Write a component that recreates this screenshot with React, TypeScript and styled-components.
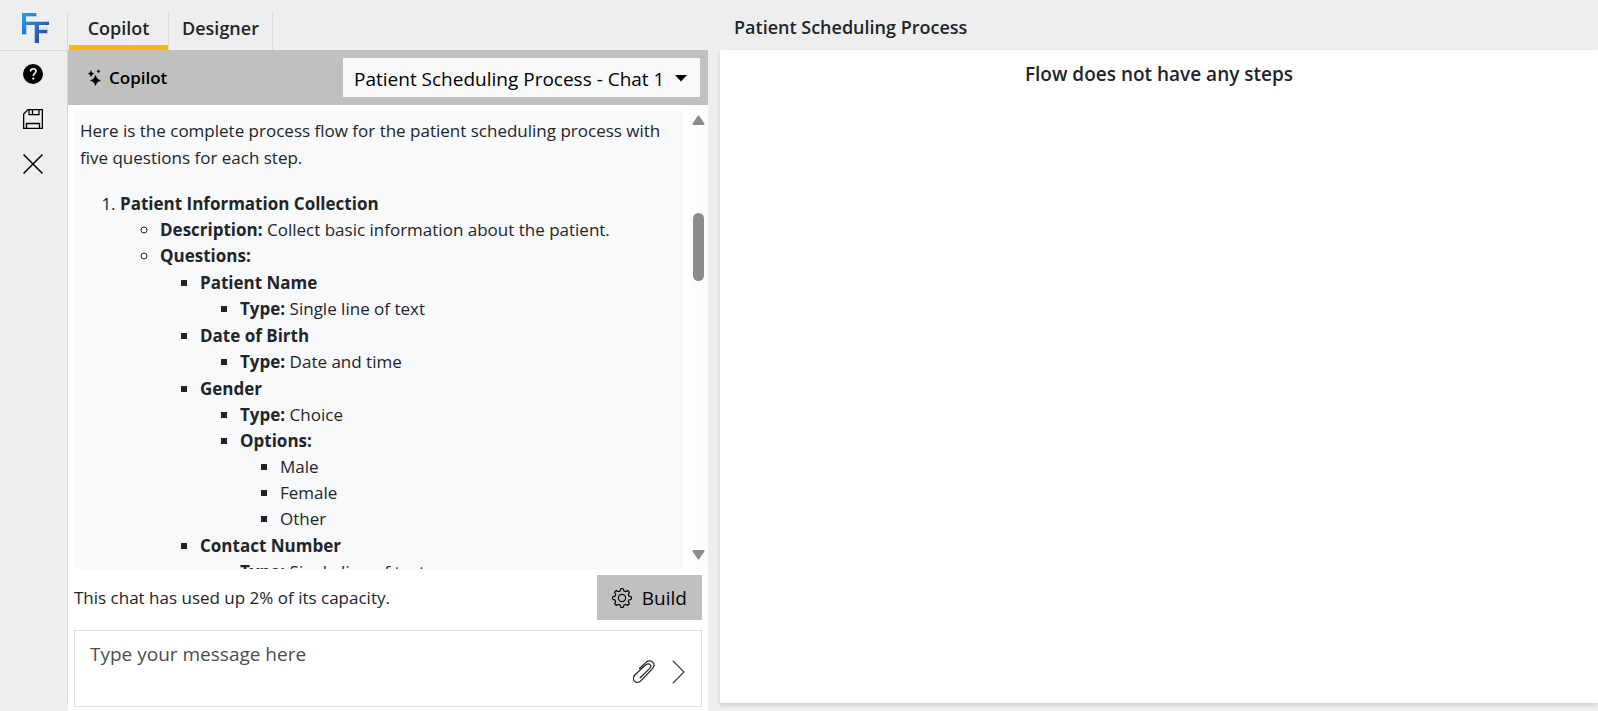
import React from 'react';
import styled, { createGlobalStyle } from 'styled-components';

const GlobalStyle = createGlobalStyle`
  *, *::before, *::after { box-sizing: border-box; }
  body {
    margin: 0;
    background: #eeeeee;
    color: #212529;
    font-family: "Open Sans", "Noto Sans", sans-serif;
    font-size: 17px;
    line-height: 26px;
  }
  button, select, textarea { font: inherit; color: inherit; }
`;

const Shell = styled.div`
  display: grid;
  grid-template-columns: 68px minmax(0, 640fr) minmax(0, 890fr);
  height: 100vh;
`;

const Sidebar = styled.nav`
  margin: 13px 0 8px;
  border-right: 1px solid #d9d9d9;
  display: flex;
  flex-direction: column;
`;

const LogoLink = styled.a`
  display: flex;
  height: 38px;
  padding-left: 21px;
  border-bottom: 1px solid #d9d9d9;
`;

const SideActions = styled.div`
  display: flex;
  flex-direction: column;
  align-items: center;
  gap: 1px;
  padding: 1px 1px 0 0;
`;

const IconButton = styled.button<{ $width?: number; $height?: number }>`
  display: grid;
  place-items: center;
  width: ${(p) => p.$width ?? 44}px;
  height: ${(p) => p.$height ?? 44}px;
  padding: 0;
  border: 0;
  background: transparent;
  color: #000;
  cursor: pointer;
`;

const ChatColumn = styled.section`
  display: flex;
  flex-direction: column;
  min-height: 0;
`;

const TabBar = styled.div`
  display: flex;
  flex: none;
  height: 50px;
  padding: 13px 0 0 1px;
`;

const Tab = styled.button<{ $width: number; $active?: boolean }>`
  min-width: ${(p) => p.$width}px;
  padding: 0 0 7px;
  border: 0;
  border-right: 1px solid #d9d9d9;
  background: ${(p) =>
    p.$active
      ? 'linear-gradient(#f2b816, #f2b816) left bottom / 100% 5px no-repeat'
      : 'transparent'};
  font-size: 18px;
  font-weight: 600;
  line-height: 30px;
  cursor: pointer;
`;

const ChatPanel = styled.div`
  display: flex;
  flex: 1;
  flex-direction: column;
  min-height: 0;
  background: #fff;
`;

const ChatHeader = styled.header`
  display: flex;
  flex: none;
  align-items: center;
  justify-content: space-between;
  height: 55px;
  padding: 0 8px 0 20px;
  background: #c0c0c0;
`;

const ChatTitle = styled.h2`
  display: flex;
  align-items: center;
  gap: 8px;
  margin: 0;
  color: #000;
  font-size: 17px;
  font-weight: 600;
`;

const SelectWrap = styled.div`
  display: grid;
  align-items: center;
  > * { grid-area: 1 / 1; }
  > svg { justify-self: end; margin-right: 13px; pointer-events: none; }
`;

const ChatSelect = styled.select`
  height: 39px;
  width: 357px;
  padding: 2px 32px 0 11px;
  border: 0;
  border-radius: 0;
  appearance: none;
  background: #f8f9fa;
  color: #000;
  font-size: 19px;
  cursor: pointer;
`;

const ScrollArea = styled.div`
  display: flex;
  flex: 1;
  min-height: 0;
`;

const Messages = styled.div`
  flex: 1;
  min-width: 0;
  margin: 6px 6px 0;
  padding: 6px 6px 0;
  overflow: hidden;
  background: #f8f9fb;
`;

const Intro = styled.p`
  margin: 0 0 20px;
  line-height: 27px;
`;

const Steps = styled.ol`
  margin: 0;
  padding-left: 40px;
`;

const Details = styled.ul`
  margin: 0;
  padding-left: 40px;
  list-style: circle;
`;

const Nested = styled.ul`
  margin: 0;
  padding-left: 40px;
  list-style: square;
`;

const Questions = styled(Nested)`
  > li { margin-top: 1px; }
`;

const ScrollBar = styled.div`
  display: flex;
  flex-direction: column;
  align-items: center;
  width: 19px;
  padding: 10px 0 9px;
  background: #fcfcfc;
`;

const Track = styled.div`
  flex: 1;
  width: 11px;
  margin: 5px 0;
`;

const Thumb = styled.div`
  width: 11px;
  border-radius: 6px;
  background: #8b8b8b;
`;

const StatusRow = styled.div`
  display: flex;
  flex: none;
  align-items: center;
  justify-content: space-between;
  padding: 6px 6px 10px;
`;

const BuildButton = styled.button`
  display: flex;
  align-items: center;
  gap: 10px;
  height: 45px;
  padding: 0 15px;
  border: 0;
  background: #c0c0c0;
  color: #000;
  font-size: 19px;
  cursor: pointer;
`;

const Composer = styled.form`
  display: flex;
  flex: none;
  height: 77px;
  margin: 0 6px 4px;
  padding-right: 6px;
  border: 1px solid #dedee6;
`;

const ComposerTools = styled.div`
  display: flex;
  align-items: center;
  padding-top: 6px;
`;

const MessageInput = styled.textarea`
  flex: 1;
  min-width: 0;
  height: 75px;
  padding: 9px 15px;
  border: 0;
  outline: 0;
  resize: none;
  background: transparent;
  font-size: 19px;
  line-height: 28px;
  &::placeholder { color: #4d4d4d; opacity: 1; }
`;

const FlowColumn = styled.main`
  display: flex;
  flex-direction: column;
  padding: 0 0 8px 12px;
  min-width: 0;
`;

const FlowTitle = styled.h1`
  flex: none;
  height: 50px;
  margin: 0;
  padding: 12px 14px 0;
  font-size: 18px;
  font-weight: 600;
  line-height: 30px;
`;

const FlowCanvas = styled.div`
  flex: 1;
  padding-top: 9px;
  background: #fff;
  box-shadow: 0 2px 4px rgba(0, 0, 0, 0.14);
  text-align: center;
  font-size: 19px;
  font-weight: 600;
  line-height: 30px;
`;

const LogoMark = () => (
  <svg width="28" height="30" viewBox="0 0 28 30" aria-hidden="true">
    <defs>
      <linearGradient id="mark" x1="0" y1="0" x2="28" y2="26" gradientUnits="userSpaceOnUse">
        <stop offset="0" stopColor="#1fa4fb" />
        <stop offset="0.5" stopColor="#2475cf" />
        <stop offset="1" stopColor="#323a93" />
      </linearGradient>
    </defs>
    <path fill="none" stroke="#b9cbe0" strokeWidth="1" d="M15.500 0V3.500M5.500 3.500H15M5.500 8.500H28M5.500 12.500V21.500M1 21.500H5M13.500 12.500V30M18.500 16H27M26.500 16V20M18 20.500H27" />
    <path fill="url(#mark)" d="M1 0H15V3H5V9H28V12H18V17H26V20H18V30H14V12H5V21H1Z" />
  </svg>
);

const HelpIcon = () => (
  <svg width="20" height="20" viewBox="0 0 20 20" aria-hidden="true">
    <circle cx="10" cy="10" r="10" />
    <path d="M7.500 7.600C7.500 3.900 13 4 13 7.200C13 9.300 10.300 9.300 10.300 12" fill="none" stroke="#fff" strokeWidth="1.600" />
    <circle cx="10.300" cy="14.600" r="1.150" fill="#fff" />
  </svg>
);

const SaveIcon = () => (
  <svg width="20" height="20" viewBox="0 0 20 20" fill="none" stroke="currentColor" strokeWidth="1.300" aria-hidden="true">
    <path d="M5 0.650H19.350V19.350H0.650V5ZM6 0.650V5.600H16V0.650M9.500 1V5.600M3.500 19V14.500H16.500V19" />
  </svg>
);

const CloseIcon = () => (
  <svg width="20" height="20" viewBox="0 0 20 20" fill="none" stroke="currentColor" strokeWidth="1.500" aria-hidden="true">
    <path d="M0.500 0.500L19.500 19.500M19.500 0.500L0.500 19.500" />
  </svg>
);

const SparkleIcon = () => (
  <svg width="13" height="17" viewBox="0 0 13 17" aria-hidden="true">
    <path
      stroke="#000"
      strokeWidth="0.300"
      strokeLinejoin="round"
      d="M7.500 6Q8.500 10.500 12.800 11.500Q8.500 12.500 7.500 16.800Q6.500 12.500 2.200 11.500Q6.500 10.500 7.500 6ZM3 1.500Q3.600 4.100 6 4.700Q3.600 5.300 3 7.800Q2.400 5.300 0.200 4.700Q2.400 4.100 3 1.500ZM10.500 0.500Q10.900 1.900 12.300 2.300Q10.900 2.700 10.500 4.100Q10.100 2.700 8.700 2.300Q10.100 1.900 10.500 0.500Z"
    />
  </svg>
);

const CaretIcon = () => (
  <svg width="12" height="8" viewBox="0 0 12 8" aria-hidden="true">
    <path d="M0 1H12L6 7.500Z" />
  </svg>
);

const ScrollArrow = ({ down = false }: { down?: boolean }) => (
  <svg width="13" height="10" viewBox="0 0 13 10" aria-hidden="true">
    <path
      d={down ? 'M1.500 1H11.500L6.500 8.500Z' : 'M1.500 9H11.500L6.500 1.500Z'}
      fill="#8b8b8b"
      stroke="#8b8b8b"
      strokeWidth="2"
      strokeLinejoin="round"
    />
  </svg>
);

const gearOutline = (() => {
  const points: string[] = [];
  for (let i = 0; i <= 96; i += 1) {
    const angle = (i / 96) * Math.PI * 2;
    const wave = Math.cos(angle * 8);
    const radius = 8.3 + Math.max(-1, Math.min(1, wave * 1.8)) * 1.1;
    points.push(`${(10 + radius * Math.sin(angle)).toFixed(2)} ${(10 - radius * Math.cos(angle)).toFixed(2)}`);
  }
  return `M${points.join('L')}Z`;
})();

const GearIcon = () => (
  <svg width="20" height="20" viewBox="0 0 20 20" fill="none" stroke="currentColor" strokeWidth="1.200" strokeLinejoin="round" aria-hidden="true">
    <path d={gearOutline} />
    <circle cx="10" cy="10" r="3.600" />
  </svg>
);

const ClipIcon = () => (
  <svg width="22" height="24" viewBox="0 0 22 24" fill="none" stroke="#222" strokeWidth="1.200" strokeLinecap="round" aria-hidden="true">
    <path d="M6.500 8.500L13.300 2.100C18.500-1.500 23.500 4.500 19.500 8.600L8 20.600C3.500 25.500-2.500 19.500 1.800 15L12.800 4.700C16.500 2.300 19.300 5.800 16.800 8.400L7.200 17.800" />
  </svg>
);

const SendIcon = () => (
  <svg width="13" height="24" viewBox="0 0 13 24" fill="none" stroke="#444" strokeWidth="1.300" aria-hidden="true">
    <path d="M0.800 0.800L12 12L0.800 23.200" />
  </svg>
);

const scroll = { before: 20, size: 16.5 };

interface Question {
  name: string;
  type: string;
  options?: string[];
}

const questions: Question[] = [
  { name: 'Patient Name', type: 'Single line of text' },
  { name: 'Date of Birth', type: 'Date and time' },
  { name: 'Gender', type: 'Choice', options: ['Male', 'Female', 'Other'] },
  { name: 'Contact Number', type: 'Single line of text' },
];

const QuestionItem = ({ name, type, options }: Question) => (
  <li>
    <strong>{name}</strong>
    <Nested>
      <li><strong>Type:</strong> {type}</li>
      {options && (
        <li>
          <strong>Options:</strong>
          <Nested>{options.map((o) => <li key={o}>{o}</li>)}</Nested>
        </li>
      )}
    </Nested>
  </li>
);

export default function App() {
  return (
    <>
      <GlobalStyle />
      <Shell>
        <Sidebar>
          <LogoLink href="#" aria-label="Home"><LogoMark /></LogoLink>
          <SideActions>
            <IconButton aria-label="Help"><HelpIcon /></IconButton>
            <IconButton aria-label="Save"><SaveIcon /></IconButton>
            <IconButton aria-label="Close"><CloseIcon /></IconButton>
          </SideActions>
        </Sidebar>

        <ChatColumn>
          <TabBar role="tablist">
            <Tab role="tab" aria-selected $active $width={100}>Copilot</Tab>
            <Tab role="tab" aria-selected={false} $width={104}>Designer</Tab>
          </TabBar>
          <ChatPanel>
            <ChatHeader>
              <ChatTitle><SparkleIcon />Copilot</ChatTitle>
              <SelectWrap>
                <ChatSelect aria-label="Chat">
                  <option>Patient Scheduling Process - Chat 1</option>
                </ChatSelect>
                <CaretIcon />
              </SelectWrap>
            </ChatHeader>
            <ScrollArea>
              <Messages>
                <Intro>
                  Here is the complete process flow for the patient scheduling process with five
                  questions for each step.
                </Intro>
                <Steps>
                  <li>
                    <strong>Patient Information Collection</strong>
                    <Details>
                      <li><strong>Description:</strong> Collect basic information about the patient.</li>
                      <li>
                        <strong>Questions:</strong>
                        <Questions>
                          {questions.map((q) => <QuestionItem key={q.name} {...q} />)}
                        </Questions>
                      </li>
                    </Details>
                  </li>
                </Steps>
              </Messages>
              <ScrollBar aria-hidden="true">
                <ScrollArrow />
                <Track>
                  <Thumb style={{ height: `${scroll.size}%`, transform: `translateY(${(scroll.before / scroll.size) * 100}%)` }} />
                </Track>
                <ScrollArrow down />
              </ScrollBar>
            </ScrollArea>
            <StatusRow>
              <span>This chat has used up 2% of its capacity.</span>
              <BuildButton><GearIcon />Build</BuildButton>
            </StatusRow>
            <Composer>
              <MessageInput aria-label="Message" placeholder="Type your message here" />
              <ComposerTools>
                <IconButton type="button" aria-label="Attach file" $width={34} $height={40}><ClipIcon /></IconButton>
                <IconButton type="submit" aria-label="Send" $width={34} $height={40}><SendIcon /></IconButton>
              </ComposerTools>
            </Composer>
          </ChatPanel>
        </ChatColumn>

        <FlowColumn>
          <FlowTitle>Patient Scheduling Process</FlowTitle>
          <FlowCanvas>Flow does not have any steps</FlowCanvas>
        </FlowColumn>
      </Shell>
    </>
  );
}
